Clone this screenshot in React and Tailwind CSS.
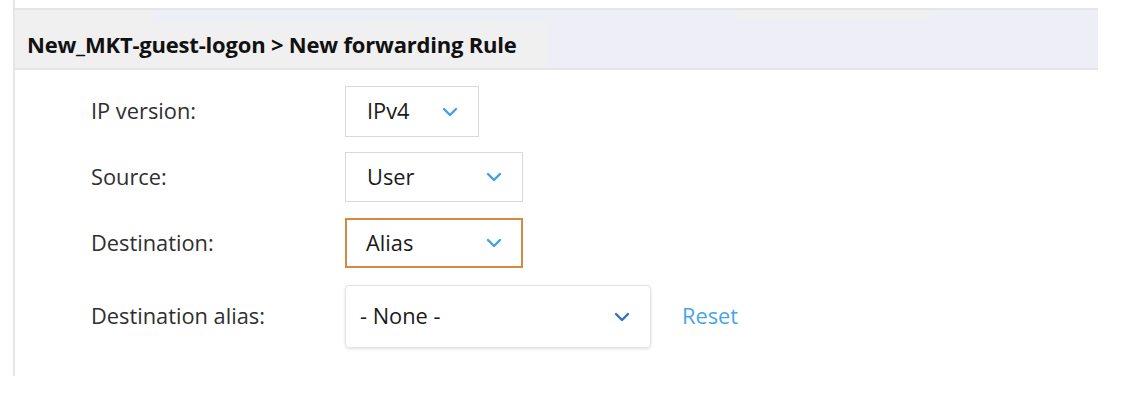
import React from "react";

const Chevron = ({ color = "#3fa1ea" }) => (
  <svg width="16" height="10" viewBox="0 0 16 10" fill="none">
    <polyline points="2,2 8,8 14,2" stroke={color} strokeWidth="2.4" strokeLinecap="round" strokeLinejoin="round" />
  </svg>
);

const font = { fontFamily: '"Open Sans", "Noto Sans", sans-serif' };

function Row({ label, children, className = "" }) {
  return (
    <div className={"flex items-center " + className}>
      <div className="w-[254px] text-[21.8px] text-[#2f2f2f]">{label}</div>
      {children}
    </div>
  );
}

export default function App() {
  return (
    <div className="w-[1126px] h-[398px] bg-white overflow-hidden" style={font}>
      <div className="ml-[13px] w-[1085px] h-[376px] border-l-2 border-[#e6e6e6] flex flex-col">
        <div className="h-[8px]" />
        <div className="h-[62px] bg-[#eeeef6] border-y-2 border-[#e4e4ea] flex flex-col">
          <div className="h-[12px] flex">
            <div className="w-[139px] bg-[#f0f0f0]" />
            <div className="w-[584px]" />
            <div className="w-[191px] h-[10px] bg-[#f0f0f0]" />
          </div>
          <div className="flex-1 w-[532px] bg-[#f0f0f0] flex items-center pl-[12px] pb-[2px]">
            <span className="text-[22px] font-bold text-[#111] tracking-[-0.2px]">
              New_MKT-guest-logon &gt; New forwarding Rule
            </span>
          </div>
        </div>
        <div className="pl-[76px] pt-[16px] flex flex-col">
          <Row label="IP version:">
            <div className="w-[134px] h-[51px] border border-[#d9d9d9] flex items-center justify-between pl-[21px] pr-[20px]">
              <span className="text-[21.8px] text-[#1a1a1a]">IPv4</span>
              <Chevron />
            </div>
          </Row>
          <Row label="Source:" className="mt-[15px]">
            <div className="w-[178px] h-[50px] border border-[#d9d9d9] flex items-center justify-between pl-[21px] pr-[20px]">
              <span className="text-[21.8px] text-[#1a1a1a]">User</span>
              <Chevron />
            </div>
          </Row>
          <Row label="Destination:" className="mt-[16px]">
            <div className="w-[178px] h-[50px] border-2 border-[#d58b3f] flex items-center justify-between pl-[19px] pr-[19px]">
              <span className="text-[21.8px] text-[#1a1a1a]">Alias</span>
              <Chevron />
            </div>
          </Row>
          <Row label="Destination alias:" className="mt-[17px]">
            <div className="w-[306px] h-[63px] rounded-[4px] border border-[#e3e3e3] shadow-[0_1px_3px_rgba(0,0,0,0.12)] flex items-center justify-between pl-[14px] pr-[20px]">
              <span className="text-[21.8px] text-[#1a1a1a]">- None -</span>
              <Chevron color="#2f73b8" />
            </div>
            <span className="ml-[31px] text-[21.8px] text-[#4aa4ea]">Reset</span>
          </Row>
        </div>
      </div>
    </div>
  );
}
